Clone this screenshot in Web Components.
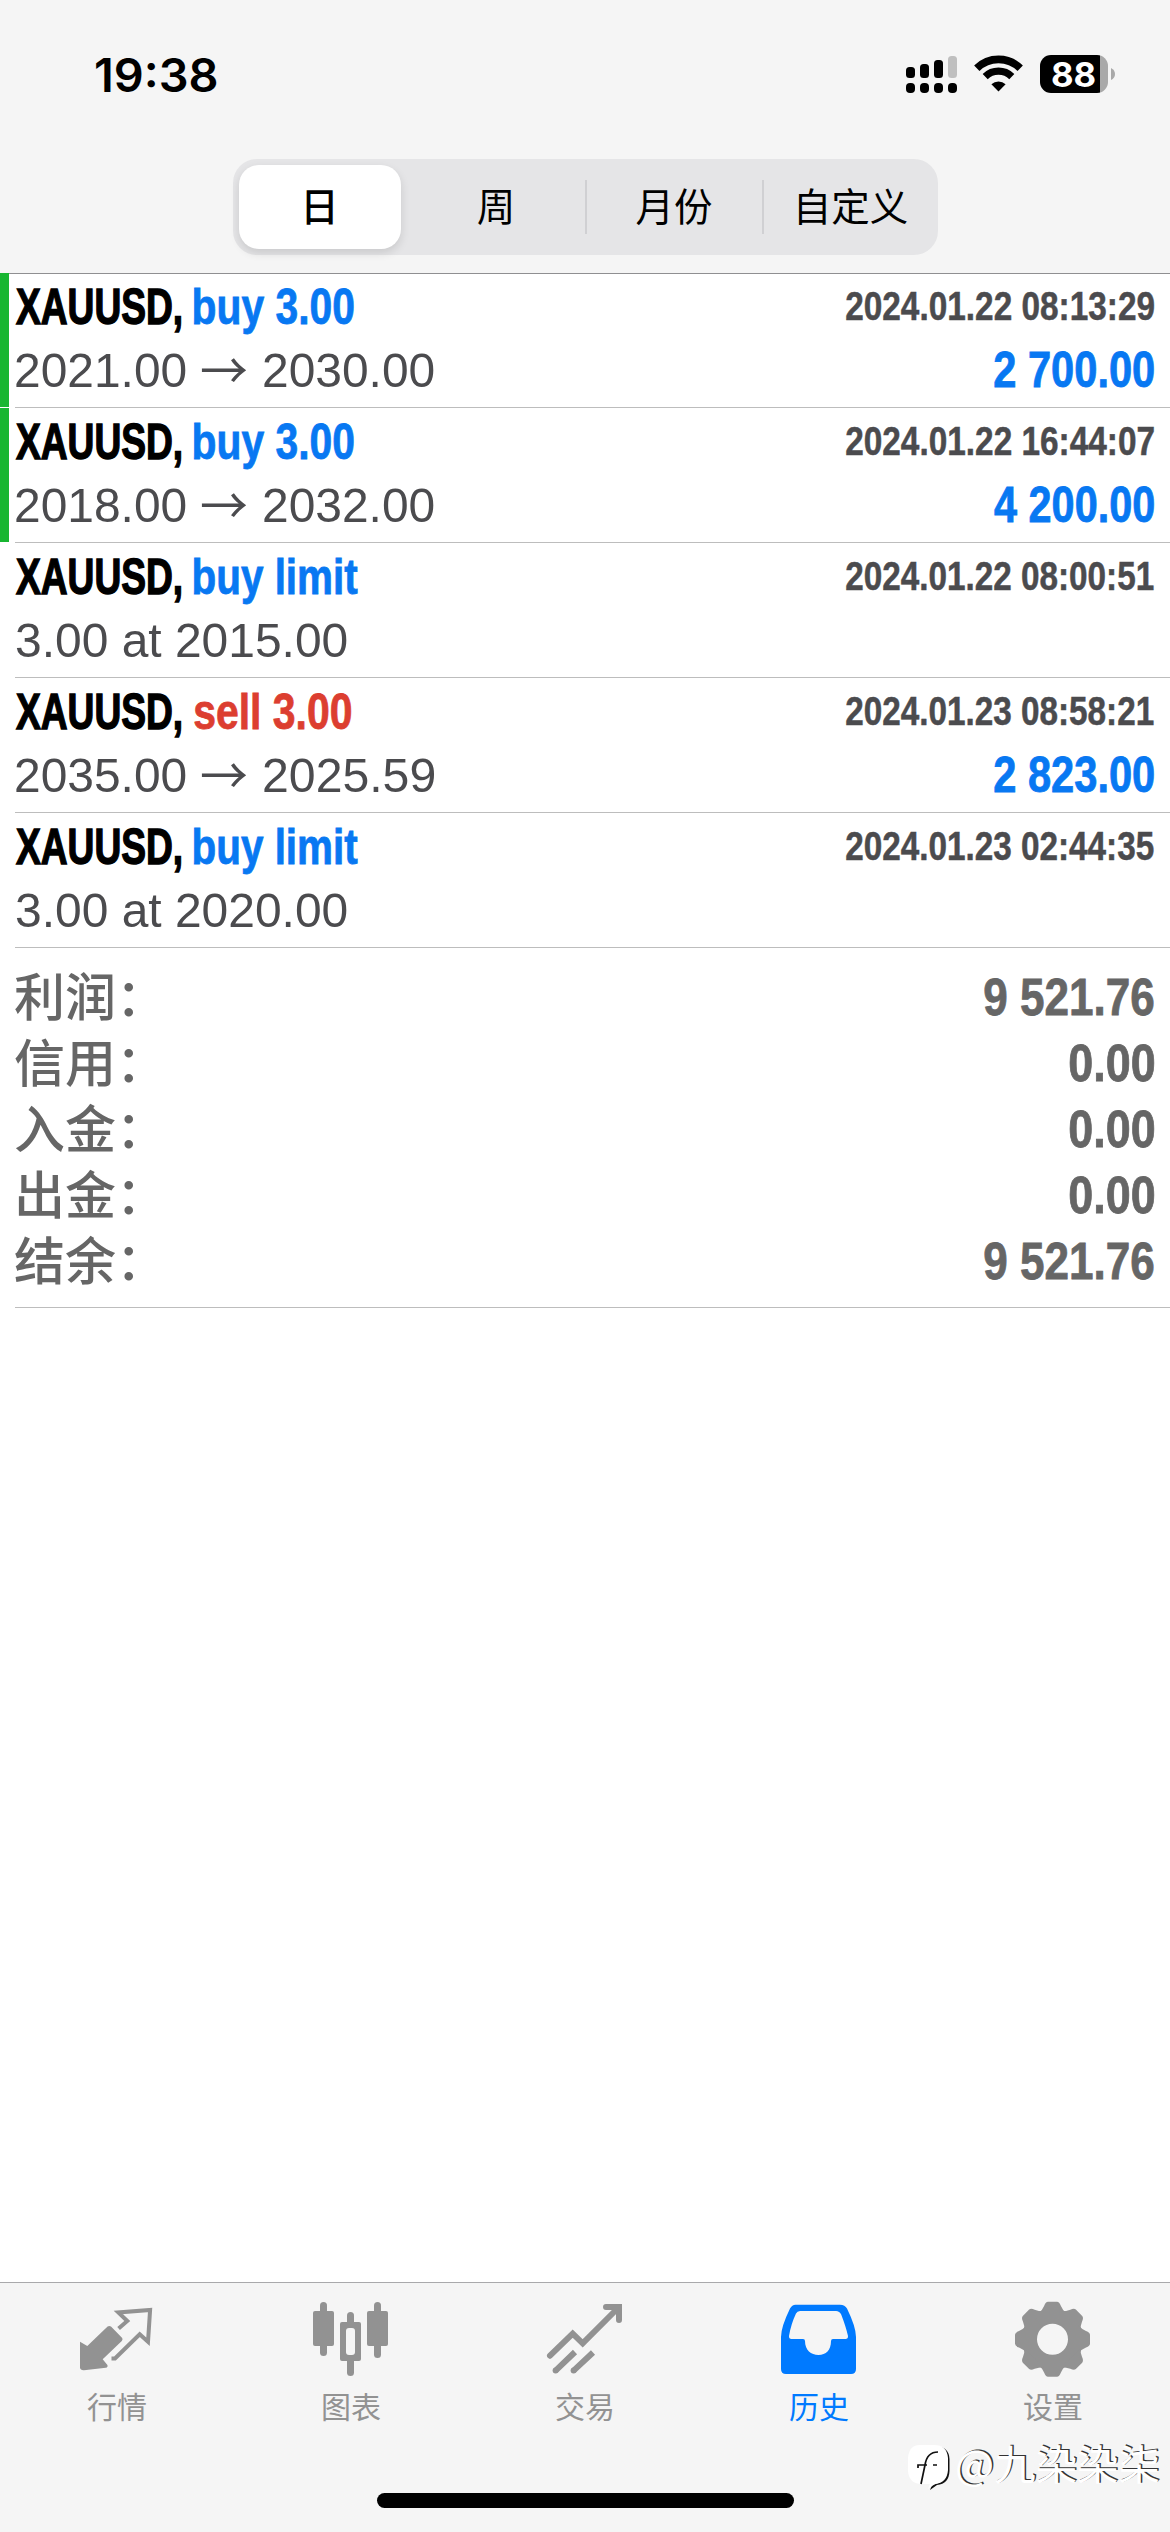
<!DOCTYPE html>
<html lang="zh-CN">
<head>
<meta charset="UTF-8">
<title>历史</title>
<style>
  html, body { margin: 0; padding: 0; }
  body {
    width: 1170px;
    height: 2532px;
    overflow: hidden;
    background: #fff;
    font-family: "Liberation Sans", "Noto Sans CJK SC", sans-serif;
  }
</style>
</head>
<body>
<history-screen></history-screen>

<script>
// Shared canvas for measuring text
const measureCtx = document.createElement('canvas').getContext('2d');

// Text whose box is as high as its capitals; width (optional) condenses the glyphs
class FitText extends HTMLElement {
  constructor() {
    super();
    this.attachShadow({ mode: 'open' });
    this.shadowRoot.innerHTML = `
      <style>
        :host { display: block; flex: none; }
        span { display: inline-block; white-space: pre; transform-origin: 0 0; vertical-align: top; }
      </style>
      <span></span>
    `;
  }

  connectedCallback() {
    const size = Number(this.getAttribute('size'));
    const width = Number(this.getAttribute('width'));
    const weight = this.getAttribute('weight') || '400';
    const family = this.getAttribute('family') || '"Liberation Sans", "Noto Sans CJK SC", sans-serif';
    const text = this.getAttribute('text');
    const span = this.shadowRoot.querySelector('span');

    measureCtx.font = `${weight} ${size}px ${family}`;
    const m = measureCtx.measureText(text);
    const cap = measureCtx.measureText('H').actualBoundingBoxAscent;
    const ascent = Math.round(m.fontBoundingBoxAscent);
    const descent = Math.round(m.fontBoundingBoxDescent);
    const lineHeight = Math.round(size * 1.2);
    const baseline = (lineHeight - ascent - descent) / 2 + ascent;

    let scale = 1;
    let shift = 0;
    if (width) {
      scale = width / (m.actualBoundingBoxRight + m.actualBoundingBoxLeft);
      shift = m.actualBoundingBoxLeft * scale;
      this.style.width = `${width}px`;
    }
    this.style.height = `${cap}px`;
    span.textContent = text;
    span.style.font = `${weight} ${size}px/${lineHeight}px ${family}`;
    span.style.transform = `translate(${shift}px, ${cap - baseline}px) scaleX(${scale})`;
  }
}
customElements.define('fit-text', FitText);

// Status bar: clock, signal, wifi, battery
class StatusBar extends HTMLElement {
  constructor() {
    super();
    this.attachShadow({ mode: 'open' });
    this.shadowRoot.innerHTML = `
      <style>
        :host {
          display: flex;
          justify-content: space-between;
          align-items: flex-start;
          box-sizing: border-box;
          height: 159px;
          padding: 55px 55px 0 96px;
        }
        .clock { padding-top: 3px; }
        .icons { display: flex; align-items: flex-start; gap: 17px; }
        svg { display: block; }
        .battery { display: flex; align-items: center; gap: 3px; }
        .cell {
          display: flex;
          align-items: center;
          box-sizing: border-box;
          width: 68px;
          height: 38px;
          padding-left: 12px;
          border-radius: 11px;
          color: #fff;
          background: linear-gradient(90deg, #000 60px, #a9a9a9 60px);
        }
      </style>
      <fit-text class="clock" size="46" weight="600" width="121" family="Inter, sans-serif" text="19:38"></fit-text>
      <div class="icons">
        <svg width="51" height="38" viewBox="0 0 51 38">
          <rect x="0" y="12" width="9" height="11" rx="3.5"/>
          <rect x="14" y="9" width="9" height="14" rx="3.5"/>
          <rect x="28" y="5" width="9" height="18" rx="3.5"/>
          <rect x="42" y="1" width="9" height="22" rx="3.5" fill="#bfbfbf"/>
          <rect x="0" y="28" width="9" height="10" rx="4"/>
          <rect x="14" y="28" width="9" height="10" rx="4"/>
          <rect x="28" y="28" width="9" height="10" rx="4"/>
          <rect x="42" y="28" width="9" height="10" rx="4"/>
        </svg>
        <svg width="49" height="38" viewBox="0 0 49 38">
          <path d="M2.8 13.2 A31 31 0 0 1 46.2 13.2" fill="none" stroke="#000" stroke-width="7.6"/>
          <path d="M11.2 21.6 A19 19 0 0 1 37.8 21.6" fill="none" stroke="#000" stroke-width="7.2"/>
          <path d="M24.5 36.5 L17.4 29.3 A10.5 10.5 0 0 1 31.6 29.3 Z"/>
        </svg>
        <div class="battery">
          <div class="cell"><fit-text size="34" weight="700" width="43" family="Inter, sans-serif" text="88"></fit-text></div>
          <svg width="4" height="12" viewBox="0 0 4 12"><path d="M0 0 Q4 2 4 6 Q4 10 0 12 Z" fill="#a9a9a9"/></svg>
        </div>
      </div>
    `;
  }
}
customElements.define('status-bar', StatusBar);

// Period switch
class PeriodSwitch extends HTMLElement {
  constructor() {
    super();
    this.attachShadow({ mode: 'open' });
    this.shadowRoot.innerHTML = `
      <style>
        :host {
          display: grid;
          grid-template-columns: 169px 177px 177px 1fr;
          align-items: center;
          box-sizing: border-box;
          width: 705px;
          height: 96px;
          margin: 0 auto;
          padding: 6px 0 6px 6px;
          border-radius: 24px;
          background: #e5e5e7;
        }
        div {
          display: flex;
          justify-content: center;
          align-items: center;
          box-sizing: border-box;
          height: 54px;
          padding-bottom: 5px;
          font: 400 38.5px/49px "Noto Sans CJK SC", sans-serif;
          color: #000;
        }
        .active {
          width: 162px;
          height: 84px;
          border-radius: 20px;
          background: #fff;
          font-weight: 500;
          box-shadow: 0 4px 10px rgba(0,0,0,0.12);
        }
        .line { border-left: 2px solid #d0d0d3; }
      </style>
      <div class="active">日</div>
      <div>周</div>
      <div class="line">月份</div>
      <div class="line">自定义</div>
    `;
  }
}
customElements.define('period-switch', PeriodSwitch);

// One deal or order of the list
class DealItem extends HTMLElement {
  constructor() {
    super();
    this._deal = null;
    this.attachShadow({ mode: 'open' });
  }

  set deal(deal) {
    this._deal = deal;
    this.render();
  }

  render() {
    const d = this._deal;
    if (!d) return;
    this.shadowRoot.innerHTML = `
      <style>
        :host { display: flex; height: 135px; }
        .mark { width: 9px; height: 134px; margin-right: 6px; }
        .mark.closed { background: #18b631; }
        .content { flex: 1; border-bottom: 1px solid #bdbdbd; box-sizing: border-box; padding: 0 16px 0 1px; }
        .line { display: flex; align-items: flex-end; color: #4b4b4e; }
        .top { height: 51px; }
        .bottom { height: 63px; }
        .symbol { color: #000; margin-right: 13px; -webkit-text-stroke: 1.4px; }
        .buy, .sell, .profit { -webkit-text-stroke: 0.8px; }
        .buy, .profit { color: #0878f2; }
        .sell { color: #dc3e30; }
        .time { margin: 0 0 4px auto; -webkit-text-stroke: 0.5px; }
        .arrow { margin: 0 17px -2px 16px; }
        .profit { margin-left: auto; }
      </style>
      <div class="mark ${d.closed ? 'closed' : ''}"></div>
      <div class="content">
        <div class="line top">
          <fit-text class="symbol" size="50" weight="700" width="165" text="XAUUSD,"></fit-text>
          <fit-text class="${d.side}" size="50" weight="700" width="${d.typeWidth}" text="${d.type}"></fit-text>
          <fit-text class="time" size="40" weight="700" width="308" text="${d.time}"></fit-text>
        </div>
        <div class="line bottom">
          ${d.to ? `
          <fit-text size="49" width="170" text="${d.from}"></fit-text>
          <fit-text class="arrow" size="50" width="45" family="'Noto Sans CJK SC', sans-serif" text="→"></fit-text>
          <fit-text size="49" width="170" text="${d.to}"></fit-text>
          ` : `<fit-text size="49" width="331" text="${d.from}"></fit-text>`}
          ${d.profit ? `<fit-text class="profit" size="49.5" weight="700" width="160" text="${d.profit}"></fit-text>` : ''}
        </div>
      </div>
    `;
  }
}
customElements.define('deal-item', DealItem);

// Totals below the list
class HistoryTotals extends HTMLElement {
  constructor() {
    super();
    this.attachShadow({ mode: 'open' });
  }

  connectedCallback() {
    const totals = [
      ['利润：', '9 521.76', 170],
      ['信用：', '0.00', 84],
      ['入金：', '0.00', 84],
      ['出金：', '0.00', 84],
      ['结余：', '9 521.76', 170]
    ];
    this.shadowRoot.innerHTML = `
      <style>
        :host { display: block; margin-left: 15px; padding: 1px 16px 28px 0; border-bottom: 1px solid #bdbdbd; color: #666; }
        .row { display: flex; justify-content: space-between; align-items: flex-end; height: 66px; }
        .label { margin: 0 0 -1px -1px; }
        .value { -webkit-text-stroke: 0.8px; }
      </style>
      ${totals.map(([label, value, width]) => `
      <div class="row">
        <fit-text class="label" size="51" weight="500" family="'Noto Sans CJK SC', sans-serif" text="${label}"></fit-text>
        <fit-text class="value" size="52" weight="700" width="${width}" text="${value}"></fit-text>
      </div>`).join('')}
    `;
  }
}
customElements.define('history-totals', HistoryTotals);

// Tab with its icon in the slot
class TabItem extends HTMLElement {
  constructor() {
    super();
    this.attachShadow({ mode: 'open' });
    this.shadowRoot.innerHTML = `
      <style>
        :host { display: flex; flex-direction: column; align-items: center; flex: 1; padding-top: 12px; color: #929292; }
        :host([active]) { color: #007aff; }
        ::slotted(svg) { display: block; width: 90px; height: 84px; }
        .label { margin-top: 4px; font: 400 30px/44px "Noto Sans CJK SC", sans-serif; }
      </style>
      <slot></slot>
      <div class="label"></div>
    `;
  }

  connectedCallback() {
    this.shadowRoot.querySelector('.label').textContent = this.getAttribute('label');
  }
}
customElements.define('tab-item', TabItem);

class TabBar extends HTMLElement {
  constructor() {
    super();
    this.attachShadow({ mode: 'open' });
    const tooth = '<path d="M-13.5 -26 Q-10 -29.5 -8.3 -33.5 Q-6.8 -37.5 -4.5 -37.5 L4.5 -37.5 Q6.8 -37.5 8.3 -33.5 Q10 -29.5 13.5 -26 Z"';
    const teeth = [0, 45, 90, 135, 180, 225, 270, 315].map(a => `${tooth} transform="rotate(${a})"/>`).join('');
    this.shadowRoot.innerHTML = `
      <style>
        :host { display: flex; flex-direction: column; height: 249px; border-top: 1px solid #a9a9ab; background: #f5f5f5; }
        .tabs { display: flex; height: 210px; }
        .home { width: 417px; height: 15px; margin: 0 auto; border-radius: 8px; background: #000; }
      </style>
      <div class="tabs">
        <tab-item label="行情">
          <svg viewBox="0 0 90 84">
            <path fill="currentColor" d="M8 46.7 L15.3 51 L35.6 31.6 Q37.3 30.2 39 31.6 L50.2 43 Q51 44.5 49.8 46 L30.7 64.3 L35.4 70 Q36.2 72.3 33.8 72.8 L12 75.2 Q8.3 75.4 8 72.5 Z"/>
            <path fill="none" stroke="currentColor" stroke-width="4" d="M46.6 33.6 L55.3 26 L46.3 17.4 L78.1 15 L76 46.8 L67.7 39.2 L43 63.4 H39.5"/>
          </svg>
        </tab-item>
        <tab-item label="图表">
          <svg viewBox="0 0 90 84" fill="currentColor">
            <rect x="14" y="7" width="7" height="54" rx="3.5"/>
            <rect x="7" y="16" width="21" height="35" rx="2"/>
            <rect x="41" y="17" width="7" height="64" rx="3.5"/>
            <rect x="34" y="27" width="21" height="39" rx="2"/>
            <rect x="40" y="33" width="9" height="27" rx="3" fill="#f5f5f5"/>
            <rect x="68" y="7" width="7" height="56" rx="3.5"/>
            <rect x="61" y="16" width="21" height="35" rx="2"/>
          </svg>
        </tab-item>
        <tab-item label="交易">
          <svg viewBox="0 0 90 84" fill="none" stroke="currentColor" stroke-width="6">
            <path stroke-linecap="round" d="M10 60.7 L32.7 38.7 L42.7 48.3 L77 14"/>
            <path stroke-linecap="round" d="M66 12 H79 V25"/>
            <path d="M15.6 75.6 L35 57 M33.6 75.6 L53 57.5"/>
            <g fill="currentColor" stroke="none"><circle cx="15.6" cy="75.6" r="3"/><circle cx="33.6" cy="75.6" r="3"/></g>
          </svg>
        </tab-item>
        <tab-item label="历史" active>
          <svg viewBox="0 0 90 84">
            <path fill="currentColor" fill-rule="evenodd" d="M21.5 9.7 H66 Q71 9.7 73 13.5 Q82 32 82 42 V74 Q82 79 77 79 H12 Q7 79 7 74 V42 Q7 32 16 13.5 Q18 9.7 21.5 9.7 Z
              M26 16 Q23.2 16 22 18.5 Q17 29 15 41 Q14.8 44 17.5 44 H29 Q31 44 31 46 C31 55 37 60 44.5 60 C52 60 57 55 57 46 Q57 44 59 44 H71.5 Q74.2 44 74 41 Q72 32 67.2 19.5 Q65.5 16 62 16 Z"/>
          </svg>
        </tab-item>
        <tab-item label="设置">
          <svg viewBox="0 0 90 84">
            <g transform="translate(44.5 44.3)" fill="currentColor">
              <circle r="23" fill="none" stroke="currentColor" stroke-width="15"/>
              ${teeth}
            </g>
          </svg>
        </tab-item>
      </div>
      <div class="home"></div>
    `;
  }
}
customElements.define('tab-bar', TabBar);

// Author mark over the lower right corner
class AuthorMark extends HTMLElement {
  constructor() {
    super();
    this.attachShadow({ mode: 'open' });
    this.shadowRoot.innerHTML = `
      <style>
        :host { display: flex; align-items: center; gap: 5px; color: #fff; }
        svg { display: block; }
        fit-text { margin-top: -4px; text-shadow: 1.5px -0.5px 0 #333; }
      </style>
      <svg width="44" height="48" viewBox="0 0 44 48">
        <path d="M28 3 Q41 4 41.5 16 V28 Q41 41 29 42 L22 47 L24 42 Q37 40 38 27 V15 Q37 5 28 3 Z" fill="#111"/>
        <path d="M12 2 H26 Q39 2 40 15 V27 Q39 40 27 41 L20 46 L22 41 H12 Q1 40 0 28 V15 Q1 2 12 2 Z" fill="#fff"/>
        <path d="M13 41 L17 22 Q19 9 30 9 M10 25 V22 H19 M25 22 H29" fill="none" stroke="#111" stroke-width="1.7"/>
      </svg>
      <fit-text size="41" width="202" family="'Noto Sans CJK SC', sans-serif" text="@九染染柒"></fit-text>
    `;
  }
}
customElements.define('author-mark', AuthorMark);

class HistoryScreen extends HTMLElement {
  constructor() {
    super();
    this.attachShadow({ mode: 'open' });
    this.shadowRoot.innerHTML = `
      <style>
        :host { display: flex; flex-direction: column; position: relative; width: 1170px; height: 2532px; background: #fff; }
        header { height: 273px; background: #f5f5f5; border-bottom: 1px solid #8f8f91; }
        main { flex: 1; margin-top: -1px; }
        author-mark { position: absolute; right: 11px; bottom: 41px; }
      </style>
      <header>
        <status-bar></status-bar>
        <period-switch></period-switch>
      </header>
      <main>
        <div class="deals"></div>
        <history-totals></history-totals>
      </main>
      <tab-bar></tab-bar>
      <author-mark></author-mark>
    `;
  }

  connectedCallback() {
    const deals = [
      { closed: true, side: 'buy', type: 'buy 3.00', typeWidth: 159.5, time: '2024.01.22 08:13:29', from: '2021.00', to: '2030.00', profit: '2 700.00' },
      { closed: true, side: 'buy', type: 'buy 3.00', typeWidth: 159.5, time: '2024.01.22 16:44:07', from: '2018.00', to: '2032.00', profit: '4 200.00' },
      { side: 'buy', type: 'buy limit', typeWidth: 164, time: '2024.01.22 08:00:51', from: '3.00 at 2015.00' },
      { side: 'sell', type: 'sell 3.00', typeWidth: 157, time: '2024.01.23 08:58:21', from: '2035.00', to: '2025.59', profit: '2 823.00' },
      { side: 'buy', type: 'buy limit', typeWidth: 164, time: '2024.01.23 02:44:35', from: '3.00 at 2020.00' }
    ];
    const list = this.shadowRoot.querySelector('.deals');
    deals.forEach(deal => {
      const item = document.createElement('deal-item');
      item.deal = deal;
      list.appendChild(item);
    });
  }
}
customElements.define('history-screen', HistoryScreen);
</script>
</body>
</html>
